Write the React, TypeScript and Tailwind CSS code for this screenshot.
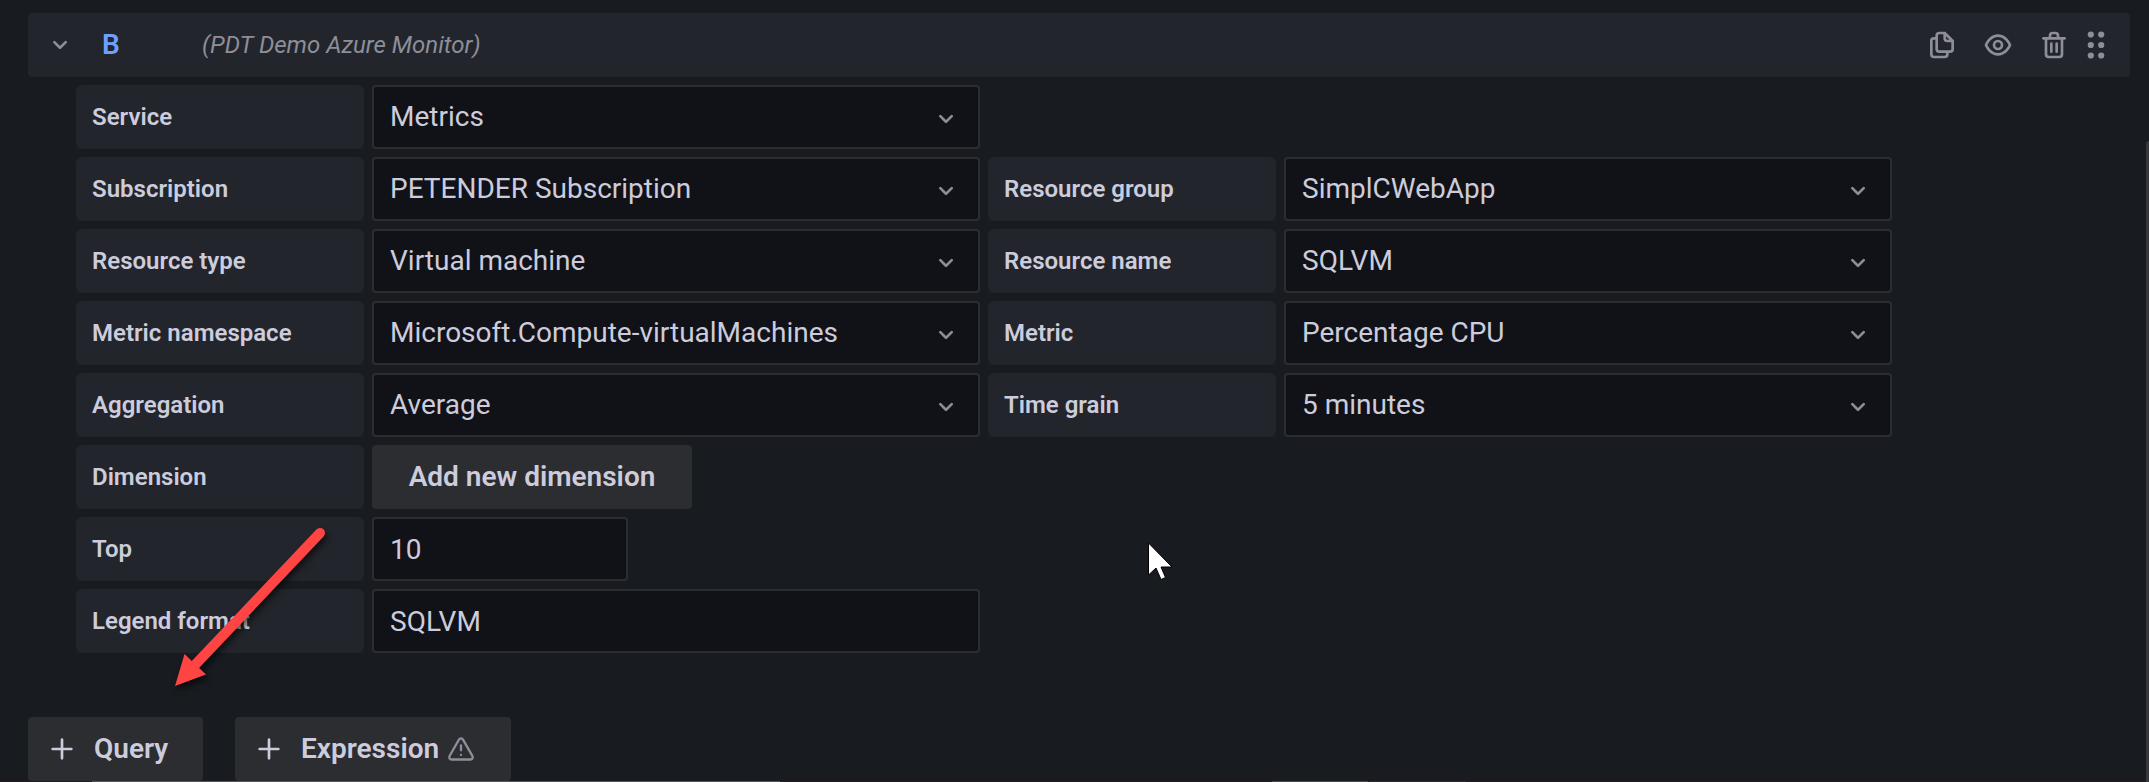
import { useState } from "react";

const paths = {
  copy: "M21,8.94a1.31,1.31,0,0,0-.06-.27l0-.09a1.07,1.07,0,0,0-.19-.28h0l-6-6h0a1.07,1.07,0,0,0-.28-.19.32.32,0,0,0-.09,0A.88.88,0,0,0,14.05,2H10A3,3,0,0,0,7,5V6H6A3,3,0,0,0,3,9V19a3,3,0,0,0,3,3h8a3,3,0,0,0,3-3V18h1a3,3,0,0,0,3-3V9S21,9,21,8.94ZM15,5.41,17.59,8H16a1,1,0,0,1-1-1ZM15,19a1,1,0,0,1-1,1H6a1,1,0,0,1-1-1V9A1,1,0,0,1,6,8H7v7a3,3,0,0,0,3,3h5Zm4-4a1,1,0,0,1-1,1H10a1,1,0,0,1-1-1V5a1,1,0,0,1,1-1h3V7a3,3,0,0,0,3,3h3Z",
  eye: "M21.92,11.6C19.9,6.91,16.1,4,12,4S4.1,6.91,2.08,11.6a1,1,0,0,0,0,.8C4.1,17.09,7.9,20,12,20s7.9-2.91,9.92-7.6A1,1,0,0,0,21.92,11.6ZM12,18c-3.17,0-6.17-2.29-7.9-6C5.83,8.29,8.83,6,12,6s6.17,2.29,7.9,6C18.17,15.71,15.17,18,12,18ZM12,8a4,4,0,1,0,4,4A4,4,0,0,0,12,8Zm0,6a2,2,0,1,1,2-2A2,2,0,0,1,12,14Z",
  trash: "M10,18a1,1,0,0,0,1-1V11a1,1,0,0,0-2,0v6A1,1,0,0,0,10,18ZM20,6H16V5a3,3,0,0,0-3-3H11A3,3,0,0,0,8,5V6H4A1,1,0,0,0,4,8H5V19a3,3,0,0,0,3,3h8a3,3,0,0,0,3-3V8h1a1,1,0,0,0,0-2ZM10,5a1,1,0,0,1,1-1h2a1,1,0,0,1,1,1V6H10Zm7,14a1,1,0,0,1-1,1H8a1,1,0,0,1-1-1V8H17Zm-3-1a1,1,0,0,0,1-1V11a1,1,0,0,0-2,0v6A1,1,0,0,0,14,18Z",
  angleDown: "M17,9.17a1,1,0,0,0-1.41,0L12,12.71,8.46,9.17a1,1,0,0,0-1.41,0,1,1,0,0,0,0,1.42l4.24,4.24a1,1,0,0,0,1.42,0L17,10.59A1,1,0,0,0,17,9.17Z",
  plus: "M19,11H13V5a1,1,0,0,0-2,0v6H5a1,1,0,0,0,0,2h6v6a1,1,0,0,0,2,0V13h6a1,1,0,0,0,0-2Z",
  warning: "M12,16a1,1,0,1,0,1,1A1,1,0,0,0,12,16Zm10.67,1.47-8.05-14a3,3,0,0,0-5.24,0l-8,14A3,3,0,0,0,3.94,22H20.06a3,3,0,0,0,2.61-4.53Zm-1.73,2a1,1,0,0,1-.88.51H3.94a1,1,0,0,1-.88-.51,1,1,0,0,1,0-1l8-14a1,1,0,0,1,1.78,0l8.05,14A1,1,0,0,1,20.94,19.49ZM12,8a1,1,0,0,0-1,1v4a1,1,0,0,0,2,0V9A1,1,0,0,0,12,8Z",
};

function Icon({ name, className = "size-8" }: { name: keyof typeof paths; className?: string }) {
  return (
    <svg viewBox="0 0 24 24" fill="currentColor" aria-hidden="true" className={`shrink-0 ${className}`}>
      <path d={paths[name]} />
    </svg>
  );
}

function FieldLabel({ id, children }: { id: string; children: string }) {
  return (
    <label htmlFor={id} className="flex h-16 w-72 shrink-0 items-center rounded-md bg-[#22252b] px-4 text-2xl font-semibold">
      {children}
    </label>
  );
}

function SelectField({ id, label, value }: { id: string; label: string; value: string }) {
  return (
    <div className="flex gap-2">
      <FieldLabel id={id}>{label}</FieldLabel>
      <div className="relative w-[608px]">
        <select
          id={id}
          defaultValue={value}
          className="h-16 w-full appearance-none rounded-sm border-2 border-[#2c2d31] bg-[#111217] px-4 text-[28px] outline-none"
        >
          <option>{value}</option>
        </select>
        <span className="pointer-events-none absolute inset-y-0 right-[18px] flex items-center pt-1 text-[#8d8e9a]">
          <Icon name="angleDown" />
        </span>
      </div>
    </div>
  );
}

function TextField({ id, label, initial, width }: { id: string; label: string; initial: string; width: string }) {
  const [value, setValue] = useState(initial);
  return (
    <div className="flex gap-2">
      <FieldLabel id={id}>{label}</FieldLabel>
      <input
        id={id}
        value={value}
        onChange={(e) => setValue(e.target.value)}
        className={`h-16 rounded-sm border-2 border-[#2c2d31] bg-[#111217] px-4 text-[28px] outline-none ${width}`}
      />
    </div>
  );
}

const rows = [
  [{ id: "service", label: "Service", value: "Metrics" }],
  [
    { id: "subscription", label: "Subscription", value: "PETENDER Subscription" },
    { id: "resource-group", label: "Resource group", value: "SimplCWebApp" },
  ],
  [
    { id: "resource-type", label: "Resource type", value: "Virtual machine" },
    { id: "resource-name", label: "Resource name", value: "SQLVM" },
  ],
  [
    { id: "metric-namespace", label: "Metric namespace", value: "Microsoft.Compute-virtualMachines" },
    { id: "metric", label: "Metric", value: "Percentage CPU" },
  ],
  [
    { id: "aggregation", label: "Aggregation", value: "Average" },
    { id: "time-grain", label: "Time grain", value: "5 minutes" },
  ],
];

export default function App() {
  return (
    <div className="relative min-h-screen overflow-hidden bg-[#181b1f] pt-[13px] font-[Roboto,sans-serif] text-[#ccccdc]">
      <header className="mr-[19px] ml-7 flex h-16 items-center rounded-sm bg-[#22252b] pr-[18px] pl-4 text-[#8d8e9a]">
        <button type="button" aria-label="Collapse query" className="flex">
          <Icon name="angleDown" />
        </button>
        <h2 className="ml-[26px] w-[100px] text-[28px] font-semibold text-[#6e9fff]">B</h2>
        <em className="text-2xl">(PDT Demo Azure Monitor)</em>
        <div className="ml-auto flex gap-6">
          <button type="button" aria-label="Duplicate query" className="flex">
            <Icon name="copy" />
          </button>
          <button type="button" aria-label="Toggle query" className="flex">
            <Icon name="eye" />
          </button>
          <button type="button" aria-label="Remove query" className="flex">
            <Icon name="trash" />
          </button>
        </div>
        <button type="button" aria-label="Move query" className="ml-[10px] flex">
          <svg viewBox="0 0 32 32" fill="currentColor" aria-hidden="true" className="size-8">
            <circle cx="10.8" cy="5.5" r="3.1" />
            <circle cx="21.2" cy="5.5" r="3.1" />
            <circle cx="10.8" cy="16" r="3.1" />
            <circle cx="21.2" cy="16" r="3.1" />
            <circle cx="10.8" cy="26.5" r="3.1" />
            <circle cx="21.2" cy="26.5" r="3.1" />
          </svg>
        </button>
      </header>

      <form className="mt-2 flex flex-col gap-2 pl-[76px]" onSubmit={(e) => e.preventDefault()}>
        {rows.map((row) => (
          <div key={row[0].id} className="flex flex-wrap gap-2">
            {row.map((field) => (
              <SelectField key={field.id} {...field} />
            ))}
          </div>
        ))}
        <div className="flex gap-2">
          <FieldLabel id="dimension">Dimension</FieldLabel>
          <button id="dimension" type="button" className="h-16 min-w-80 rounded-sm bg-[#2c2d31] px-8 text-[28px] font-semibold">
            Add new dimension
          </button>
        </div>
        <TextField id="top" label="Top" initial="10" width="w-64" />
        <TextField id="legend-format" label="Legend format" initial="SQLVM" width="w-[608px]" />
      </form>

      <div className="mt-16 flex gap-8 pl-7">
        <button type="button" className="flex h-16 min-w-[175px] items-center gap-4 rounded-sm bg-[#2c2d31] pr-8 pl-[18px] text-[28px] font-semibold">
          <Icon name="plus" />
          Query
        </button>
        <button type="button" className="flex h-16 min-w-[276px] items-center gap-4 rounded-sm bg-[#2c2d31] pr-8 pl-[18px] text-[28px] font-semibold">
          <Icon name="plus" />
          <span className="flex items-center gap-2">
            Expression
            <Icon name="warning" className="size-7 text-[#8d8e9a]" />
          </span>
        </button>
      </div>

      <div className="flex h-px bg-[#201c1f]">
        <div className="ml-[92px] w-[688px] bg-[#555659]" />
        <div className="ml-[492px] w-24 bg-[#48484b]" />
        <div className="ml-0.5 w-24 bg-[#2f2d31]" />
      </div>

      <div className="absolute top-[141px] right-0 bottom-0 w-[3px] rounded-tl-sm bg-[#37393c]" />

      <svg
        viewBox="0 0 170 180"
        aria-hidden="true"
        className="pointer-events-none absolute top-[520px] left-[165px] h-[180px] w-[170px] drop-shadow-[2px_4px_3px_rgba(0,0,0,0.6)]"
      >
        <path d="M155 13L29 146" stroke="#ff4444" strokeWidth="10" strokeLinecap="round" />
        <path d="M10 166L19.500 134L41 154.500Z" fill="#ff4444" />
      </svg>

      <svg
        viewBox="0 0 26 40"
        aria-hidden="true"
        className="pointer-events-none absolute top-[542px] left-[1147px] h-10 w-[26px]"
      >
        <path d="M1.500 1V33L9 26L14 37.500L18.500 35.500L14 25H25Z" fill="#ffffff" stroke="#000000" />
      </svg>
    </div>
  );
}
